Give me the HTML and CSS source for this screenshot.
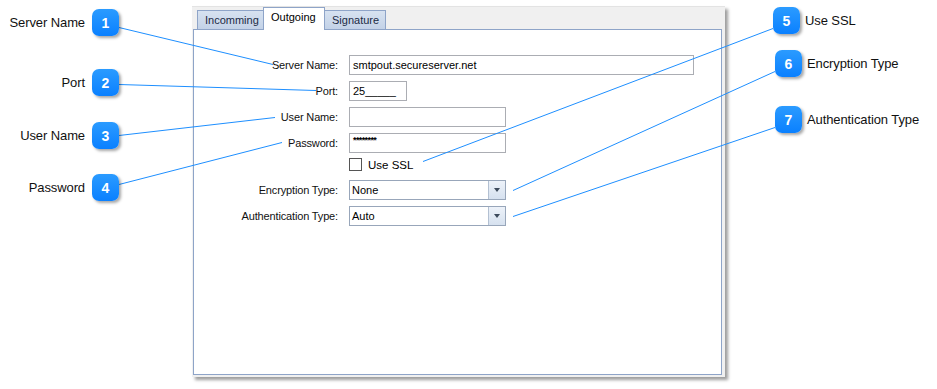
FILE: index.html
```html
<!DOCTYPE html>
<html lang="en">
<head>
    <meta charset="UTF-8">
    <title>Outgoing Mail Settings</title>
    <link rel="stylesheet" href="styles.css">
</head>
<body>
    <div class="stage">
        <!-- screenshot of the dialog -->
        <div class="shot">
            <div class="tabs">
                <div class="tab">Incomming</div>
                <div class="tab active">Outgoing</div>
                <div class="tab">Signature</div>
            </div>
            <div class="panel">
                <div class="form">
                    <label class="lbl">Server Name:</label>
                    <div class="field w-long">smtpout.secureserver.net</div>

                    <label class="lbl">Port:</label>
                    <div class="field w-port">25_____</div>

                    <label class="lbl">User Name:</label>
                    <div class="field w-mid"></div>

                    <label class="lbl">Password:</label>
                    <div class="field w-mid pass">********</div>

                    <span></span>
                    <div class="check"><span class="box"></span>Use SSL</div>

                    <label class="lbl">Encryption Type:</label>
                    <div class="combo w-mid"><span class="val">None</span><span class="drop"><i></i></span></div>

                    <label class="lbl">Authentication Type:</label>
                    <div class="combo w-mid"><span class="val">Auto</span><span class="drop"><i></i></span></div>
                </div>
            </div>
        </div>

        <!-- callout lines -->
        <svg class="lines" width="937" height="389" viewBox="0 0 937 389">
            <g stroke="#1e8fff" stroke-width="1" fill="none">
                <line x1="119" y1="27.5" x2="273" y2="64.5"/>
                <line x1="119" y1="84.5" x2="316" y2="90.5"/>
                <line x1="119" y1="135.5" x2="275" y2="117.5"/>
                <line x1="119" y1="184.5" x2="282" y2="142.5"/>
                <line x1="773" y1="28.5" x2="423" y2="161.5"/>
                <line x1="775" y1="71.5" x2="513" y2="190.5"/>
                <line x1="775" y1="127.5" x2="513" y2="216.5"/>
            </g>
        </svg>

        <!-- callouts -->
        <div class="callout left c1"><span class="name">Server Name</span><span class="badge">1</span></div>
        <div class="callout left c2"><span class="name">Port</span><span class="badge">2</span></div>
        <div class="callout left c3"><span class="name">User Name</span><span class="badge">3</span></div>
        <div class="callout left c4"><span class="name">Password</span><span class="badge">4</span></div>
        <div class="callout right c5"><span class="badge">5</span><span class="name">Use SSL</span></div>
        <div class="callout right c6"><span class="badge">6</span><span class="name">Encryption Type</span></div>
        <div class="callout right c7"><span class="badge">7</span><span class="name">Authentication Type</span></div>
    </div>
</body>
</html>
```

FILE: styles.css
```css
* {
    margin: 0;
    padding: 0;
    box-sizing: border-box;
}

body {
    background: #fff;
    font-family: "Liberation Sans", Arial, sans-serif;
    color: #000;
}

.stage {
    position: relative;
    width: 937px;
    height: 389px;
    overflow: hidden;
    padding: 6px 0 0 192px;
}

/* dialog screenshot */
.shot {
    width: 533px;
    height: 371px;
    background: #f0f0f0;
    border-top: 1px solid #e3e3e3;
    box-shadow: 3px 3px 3px rgba(0, 0, 0, 0.38);
    padding: 0 3px 2px 1px;
    display: flex;
    flex-direction: column;
}

.tabs {
    display: flex;
    align-items: flex-end;
    height: 22px;
    padding-left: 4px;
}

.tab {
    height: 19px;
    padding: 0 7px;
    font-size: 11px;
    line-height: 18px;
    color: #1b2a44;
    background: linear-gradient(#d7e2f0, #c3d2e7);
    border: 1px solid #8ea4c8;
    border-bottom: none;
    margin-left: -1px;
}

.tab:first-child {
    margin-left: 0;
    width: 67px;
}

.tab.active {
    position: relative;
    z-index: 1;
    height: 23px;
    margin-bottom: -1px;
    width: 62px;
    background: #fff;
    color: #000;
    line-height: 19px;
    padding-left: 7px;
}

.tab:last-child {
    width: 62px;
}

.panel {
    flex: 1;
    background: #fff;
    border: 1px solid #8ea4c8;
    padding-top: 25px;
}

.form {
    display: grid;
    grid-template-columns: 144px auto;
    grid-template-rows: 20px 20px 20px 20px 15px 20px 20px;
    column-gap: 11px;
    row-gap: 6px;
    font-size: 11px;
}

.lbl {
    text-align: right;
    line-height: 20px;
    color: #111;
    letter-spacing: -0.15px;
}

.field {
    height: 20px;
    border: 1px solid #abadb3;
    background: #fff;
    padding: 0 3px;
    line-height: 18px;
    white-space: nowrap;
}

.w-long { width: 345px; }
.w-port { width: 58px; }
.w-mid  { width: 157px; }

.pass {
    font-size: 9px;
    line-height: 13px;
    letter-spacing: -0.6px;
    font-weight: bold;
}

.check {
    display: flex;
    align-items: center;
    gap: 6px;
    margin-top: -2px;
    height: 15px;
    font-size: 11.5px;
}

.box {
    width: 13px;
    height: 13px;
    border: 1px solid #555;
    background: #fff;
}

.combo {
    height: 20px;
    display: flex;
    border: 1px solid #98a6ba;
    background: #fff;
}

.combo .val {
    flex: 1;
    padding-left: 2px;
    line-height: 18px;
}

.combo .drop {
    width: 17px;
    border-left: 1px solid #b3c0d2;
    background: linear-gradient(#edf2f9, #d6e1ef);
    display: flex;
    align-items: center;
    justify-content: center;
}

.combo .drop i {
    width: 0;
    height: 0;
    border-left: 3.5px solid transparent;
    border-right: 3.5px solid transparent;
    border-top: 4px solid #3d4a5c;
}

/* callouts */
.lines {
    position: absolute;
    left: 0;
    top: 0;
    z-index: 2;
    pointer-events: none;
}

.callout {
    position: absolute;
    z-index: 3;
    display: flex;
    align-items: center;
    font-size: 13px;
    letter-spacing: -0.1px;
    color: #111;
}

.callout.left {
    right: 818px;
    gap: 7px;
}

.callout.right {
    gap: 5px;
}

.badge {
    width: 27px;
    height: 27px;
    border-radius: 7px;
    background: linear-gradient(#2b9bff, #0a80ff);
    box-shadow: 2px 2px 3px rgba(0, 0, 0, 0.35);
    color: #fff;
    font-weight: bold;
    font-size: 14px;
    letter-spacing: 0;
    display: flex;
    align-items: center;
    justify-content: center;
}

.c1 { top: 9px; }
.c2 { top: 69px; }
.c3 { top: 122px; }
.c4 { top: 174px; }
.c5 { top: 7px; left: 773px; }
.c6 { top: 50px; left: 775px; }
.c7 { top: 106px; left: 775px; }
```
